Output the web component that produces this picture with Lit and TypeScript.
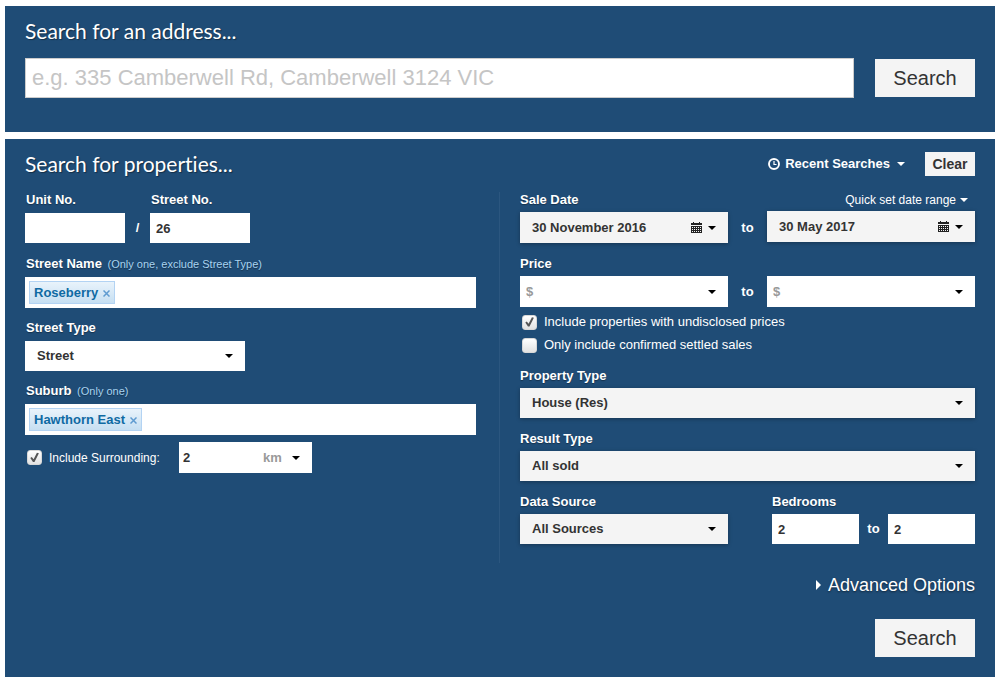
import { LitElement, html, css, svg, nothing } from "lit";
import { customElement } from "lit/decorators.js";

const caret = html`<svg class="caret" viewBox="0 0 8 4" width="8" height="4" aria-hidden="true"><path d="M0 0h8L4 4z" fill="currentColor" /></svg>`;

const calendarDots = [5, 7, 9].flatMap((y) => [1, 3, 5, 7, 9].map((x) => svg`<rect x=${x} y=${y} width="1" height="1" fill="#f4f4f4" />`));
const calendar = html`<svg class="calendar" viewBox="0 0 11 12" width="11" height="12" aria-hidden="true">
  <path d="M0 1h2V0h1v1h5V0h1v1h2v2H0zM0 4h11v7H0z" fill="#222" />
  ${calendarDots}
</svg>`;

const clock = html`<svg viewBox="0 0 12 12" width="12" height="12" aria-hidden="true">
  <circle cx="6" cy="6" r="5" fill="none" stroke="#fff" stroke-width="1.9" />
  <path d="M6 3v3.500H8.500" fill="none" stroke="#fff" stroke-width="1.2" />
</svg>`;

@customElement("app-root")
export class AppRoot extends LitElement {
  static styles = css`
    :host {
      display: block;
      padding: 6px 8px 7px 5px;
      background: #fff;
      font: 13px/16px "Liberation Sans", Arial, sans-serif;
      color: #fff;
    }
    * { box-sizing: border-box; }
    input, select, button { font: inherit; color: #333; border: 0; border-radius: 0; margin: 0; outline: 0; min-width: 0; }
    button { cursor: pointer; padding: 0; background: none; }
    a { color: inherit; text-decoration: none; }
    svg { display: block; flex: none; }
    form { background: #1f4c76; padding: 0 20px; }
    h2 { margin: 0; font: 400 21px/26px Lato, sans-serif; font-variant-ligatures: none; text-shadow: 1px 1px 1px rgba(0, 0, 0, 0.4); }

    .address { padding-top: 12px; padding-bottom: 34px; margin-bottom: 7px; }
    .address-row { display: flex; align-items: center; gap: 21px; margin-top: 14px; }
    .address-input { flex: 1; height: 40px; padding: 0 6px; border: 1px solid #ccc; background: #fff; font-size: 22px; }
    .address-input::placeholder { color: #c5c5c5; opacity: 1; }
    .search { width: 100px; height: 38px; background: #f4f4f4; font-size: 20px; line-height: 24px; }

    .properties { padding-top: 12px; padding-bottom: 20px; }
    .head { display: flex; align-items: flex-start; }
    .head h2 { flex: 1; }
    .recent { display: flex; align-items: center; gap: 5px; height: 24px; margin-right: 20px; font-weight: bold; color: #fff; }
    .recent .caret { margin-left: 2px; }
    .recent, .clear { margin-top: 1px; }
    .clear { width: 50px; height: 24px; background: #f4f4f4; font-size: 14px; font-weight: bold; }

    .columns { display: grid; grid-template-columns: 474fr 476fr; margin-top: 15px; }
    .left { display: flex; flex-direction: column; gap: 12px; padding-right: 23px; }
    .right { display: flex; flex-direction: column; gap: 13px; min-height: 371px; padding-left: 20px; border-left: 1px solid #2b567f; }
    .field { display: flex; flex-direction: column; gap: 5px; }
    .right .field { gap: 4px; }
    .label { font-weight: bold; text-shadow: 0 1px 1px rgba(0, 0, 0, 0.35); padding-left: 1px; }
    .right .label { padding-left: 0; }
    .hint { font-weight: normal; font-size: 11px; color: #a8d3f0; margin-left: 2px; }
    .text { height: 30px; padding: 0 6px; background: #fff; font-weight: bold; width: 100%; }

    .numbers { display: grid; grid-template-columns: 100px 25px 100px; align-items: end; padding-bottom: 1px; }
    .sep { height: 30px; line-height: 30px; text-align: center; font-weight: bold; }

    .tokens { display: flex; align-items: flex-start; gap: 4px; height: 31px; padding: 4px; background: #fff; }
    .token { display: flex; align-items: center; gap: 5px; height: 23px; padding: 0 4px; border: 1px solid #b3d3f3; background: linear-gradient(#e9f3fb, #c6dff2); color: #0f6aa3; font-weight: bold; white-space: nowrap; }
    .token button { color: #5f9bd0; display: flex; padding-top: 2px; }
    .tokens input { flex: 1; background: none; height: 23px; }

    .select { position: relative; display: flex; align-items: center; color: #000; }
    .select select { appearance: none; width: 100%; height: 30px; padding: 0 28px 0 12px; background: #f4f4f4; font-weight: bold; }
    .select > .caret { position: absolute; right: 12px; pointer-events: none; }
    .select.short { width: 220px; }
    .select.short select { background: #fff; }
    .raised { box-shadow: 0 1px 4px rgba(0, 0, 0, 0.3); }

    .around { display: flex; align-items: center; margin-top: -5px; padding-left: 2px; }
    .around .check { font-size: 12px; width: 152px; }
    .distance { display: flex; width: 133px; height: 31px; background: #fff; }
    .distance .text { flex: 1; height: 31px; padding-left: 4px; }
    .unit { width: 60px; flex: none; }
    .unit select { height: 31px; padding: 0 0 0 11px; background: none; color: #999; }

    .check { display: flex; align-items: center; gap: 7px; }
    .check input { appearance: none; display: grid; place-items: center; width: 15px; height: 15px; flex: none; border: 1px solid #d8d8d8; border-radius: 3px; background: linear-gradient(#fff, #e2e2e2); }
    .check input:checked::before { content: ""; width: 11px; height: 11px; background: #555; clip-path: polygon(12% 55%, 25% 45%, 42% 66%, 72% 6%, 90% 12%, 50% 92%, 36% 92%); }
    .checks { display: flex; flex-direction: column; gap: 7px; margin: -6px 0 2px; padding-left: 2px; }

    .range { display: grid; grid-template-columns: minmax(0, 208fr) 39px minmax(0, 208fr); }
    .range .sep { align-self: end; }
    .range .label { white-space: nowrap; }
    .quick { display: flex; justify-content: flex-end; align-items: center; gap: 4px; height: 15px; padding-right: 7px; font-size: 12px; color: #fff; }
    .combo { display: flex; align-items: center; height: 31px; background: #fff; padding-right: 12px; }
    .combo .text { flex: 1; height: 31px; }
    .combo .text::placeholder { color: #999; opacity: 1; }
    .combo button { display: flex; align-items: center; gap: 6px; height: 31px; color: #000; }
    .date { background: #f4f4f4; }
    .date .text { background: none; padding-left: 12px; }

    .sources { display: grid; grid-template-columns: minmax(0, 208fr) minmax(0, 203fr); gap: 44px; }
    .beds { display: grid; grid-template-columns: 1fr 29px 1fr; }

    .advanced { display: flex; justify-content: flex-end; align-items: center; gap: 7px; margin-top: 11px; font-size: 18px; line-height: 22px; text-shadow: 0 1px 2px rgba(0, 0, 0, 0.5); }
    .foot { display: flex; justify-content: flex-end; margin-top: 23px; }
  `;

  private token(text: string) {
    return html`<span class="token">${text}<button type="button" aria-label="Remove ${text}">
      <svg viewBox="0 0 7 7" width="7" height="7"><path d="M.5.5l6 6M6.500.5l-6 6" stroke="currentColor" stroke-width="1.5" /></svg>
    </button></span>`;
  }

  private select(id: string, value: string, cls = "raised") {
    return html`<div class="select ${cls}"><select id=${id} aria-label=${id === "distance-unit" ? "Distance unit" : nothing}><option>${value}</option></select>${caret}</div>`;
  }

  private check(text: string, checked: boolean) {
    return html`<label class="check"><input type="checkbox" ?checked=${checked} />${text}</label>`;
  }

  private date(id: string, value: string, label?: string) {
    return html`<div class="combo date raised">
      <input class="text" id=${id} .value=${value} aria-label=${label ?? nothing} />
      <button type="button" aria-label="Choose date">${calendar}${caret}</button>
    </div>`;
  }

  private price(id: string, label?: string) {
    return html`<div class="combo">
      <input class="text" id=${id} placeholder="$" aria-label=${label ?? nothing} />
      <button type="button" aria-label="Show prices">${caret}</button>
    </div>`;
  }

  render() {
    return html`
      <form class="address">
        <h2><label for="address">Search for an address...</label></h2>
        <div class="address-row">
          <input id="address" class="address-input" placeholder="e.g. 335 Camberwell Rd, Camberwell 3124 VIC" />
          <button type="button" class="search">Search</button>
        </div>
      </form>

      <form class="properties">
        <div class="head">
          <h2>Search for properties...</h2>
          <button type="button" class="recent">${clock}<span>Recent Searches</span>${caret}</button>
          <button type="button" class="clear">Clear</button>
        </div>

        <div class="columns">
          <div class="left">
            <div class="numbers">
              <div class="field"><label class="label" for="unit">Unit No.</label><input class="text" id="unit" /></div>
              <span class="sep">/</span>
              <div class="field"><label class="label" for="number">Street No.</label><input class="text" id="number" value="26" /></div>
            </div>
            <div class="field">
              <label class="label" for="street">Street Name <span class="hint">(Only one, exclude Street Type)</span></label>
              <div class="tokens">${this.token("Roseberry")}<input id="street" /></div>
            </div>
            <div class="field">
              <label class="label" for="type">Street Type</label>
              ${this.select("type", "Street", "short")}
            </div>
            <div class="field">
              <label class="label" for="suburb">Suburb <span class="hint">(Only one)</span></label>
              <div class="tokens">${this.token("Hawthorn East")}<input id="suburb" /></div>
            </div>
            <div class="around">
              ${this.check("Include Surrounding:", true)}
              <div class="distance">
                <input class="text" aria-label="Distance" value="2" />
                ${this.select("distance-unit", "km", "unit")}
              </div>
            </div>
          </div>

          <div class="right">
            <div class="range">
              <div class="field"><label class="label" for="from">Sale Date</label>${this.date("from", "30 November 2016")}</div>
              <span class="sep">to</span>
              <div class="field">
                <button type="button" class="quick">Quick set date range ${caret}</button>
                ${this.date("until", "30 May 2017", "Sale date to")}
              </div>
            </div>
            <div class="range">
              <div class="field"><label class="label" for="min">Price</label>${this.price("min")}</div>
              <span class="sep">to</span>
              <div class="field"><span class="label">&nbsp;</span>${this.price("max", "Price to")}</div>
            </div>
            <div class="checks">
              ${this.check("Include properties with undisclosed prices", true)}
              ${this.check("Only include confirmed settled sales", false)}
            </div>
            <div class="field"><label class="label" for="property">Property Type</label>${this.select("property", "House (Res)")}</div>
            <div class="field"><label class="label" for="result">Result Type</label>${this.select("result", "All sold")}</div>
            <div class="sources">
              <div class="field"><label class="label" for="source">Data Source</label>${this.select("source", "All Sources")}</div>
              <div class="field">
                <label class="label" for="beds">Bedrooms</label>
                <div class="beds">
                  <input class="text" id="beds" value="2" /><span class="sep">to</span><input class="text" aria-label="Bedrooms to" value="2" />
                </div>
              </div>
            </div>
          </div>
        </div>

        <a class="advanced" href="#">
          <svg viewBox="0 0 5 10" width="5" height="10" aria-hidden="true"><path d="M0 0l5 5-5 5z" fill="#fff" /></svg>Advanced Options
        </a>
        <div class="foot"><button type="button" class="search">Search</button></div>
      </form>
    `;
  }
}
